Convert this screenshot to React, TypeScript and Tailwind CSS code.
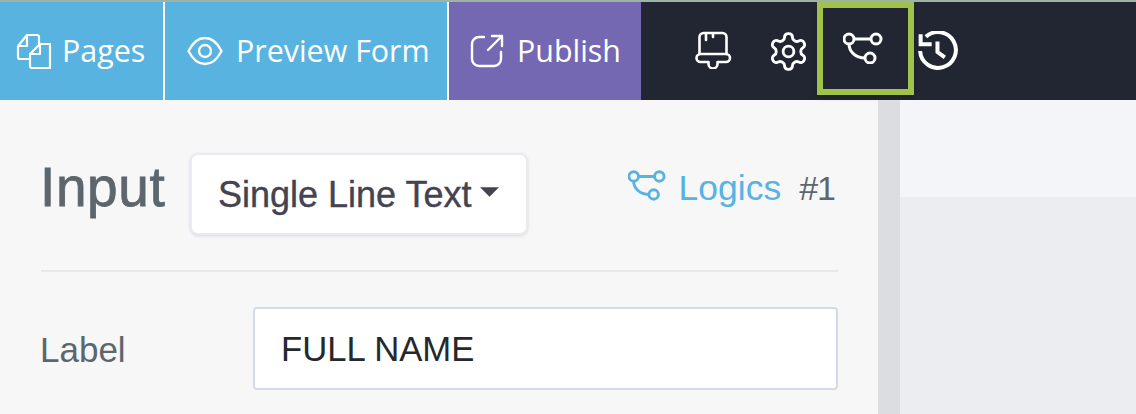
import React from 'react';

const LogicIcon = ({ className }: { className?: string }) => (
  <svg viewBox="0 0 40 32" fill="none" stroke="currentColor" strokeWidth="3" className={className}>
    <circle cx="6" cy="7" r="5" />
    <circle cx="33" cy="7" r="5" />
    <circle cx="27" cy="26" r="5" />
    <path d="M11 7h17M6 12c0 7 6 14 16 14" />
  </svg>
);

const App = () => {
  return (
    <div className="w-[1136px] h-[414px] overflow-hidden flex flex-col bg-[#f7f7f8] font-['Liberation_Sans',sans-serif]">
      <div className="h-[2px] bg-[#9db3a6]" />
      <div className="h-[98px] flex items-stretch bg-[#212632] text-white font-['Open_Sans',sans-serif] text-[30.4px]">
        <div className="w-[163px] pl-[16px] flex items-center gap-[10px] bg-[#58b3e1]">
          <svg viewBox="0 0 36 36" fill="none" stroke="currentColor" strokeWidth="2.2" strokeLinejoin="round" className="w-[36px] h-[36px]">
            <path d="M2 13 11 2h10a2 2 0 0 1 2 2v7M2 13v11a2 2 0 0 0 2 2h10M2 13h9V2" />
            <path d="M24 11h10v24H16a2 2 0 0 1-2-2V21l10-10v10H14" />
          </svg>
          <span>Pages</span>
        </div>
        <div className="w-[2px] bg-white" />
        <div className="w-[282px] pl-[22px] flex items-center gap-[13px] bg-[#58b3e1]">
          <svg viewBox="0 0 36 30" fill="none" stroke="currentColor" strokeWidth="2.4" className="w-[36px] h-[30px]">
            <path d="M1.500 15C6 6 11 2 18 2s12 4 16.500 13C30 24 25 28 18 28S6 24 1.500 15Z" />
            <circle cx="18" cy="15" r="6" />
          </svg>
          <span>Preview Form</span>
        </div>
        <div className="w-[2px] bg-white" />
        <div className="w-[192px] pl-[21px] flex items-center gap-[13px] bg-[#7468b3]">
          <svg viewBox="0 0 34 34" fill="none" stroke="currentColor" strokeWidth="2.4" strokeLinecap="round" strokeLinejoin="round" className="w-[34px] h-[34px]">
            <path d="M14 3H9a7 7 0 0 0-7 7v15a7 7 0 0 0 7 7h15a7 7 0 0 0 7-7v-7" />
            <path d="M18 16 32 2M22 2h10v10" />
          </svg>
          <span>Publish</span>
        </div>
        <div className="flex-1 flex items-center">
          <svg viewBox="0 0 37 38" fill="none" stroke="currentColor" strokeWidth="2.6" strokeLinecap="round" strokeLinejoin="round" className="ml-[54px] -mt-[2px] w-[37px] h-[38px]">
            <path d="M4.500 23V6a4 4 0 0 1 4-4h19a4 4 0 0 1 4 4v17" />
            <path d="M5.500 23H31a4 4 0 0 1 0 8h-8.500v2a4.500 4.500 0 0 1-9 0v-2H5.500a4 4 0 0 1 0-8Z" />
            <path d="M11 3v6M18 3v3" />
          </svg>
          <svg viewBox="0 0 24 24" fill="none" stroke="currentColor" strokeWidth="1.6" strokeLinecap="round" strokeLinejoin="round" className="ml-[35px] w-[43px] h-[43px]">
            <path d="M12.220 2h-.440a2 2 0 0 0-2 2v.180a2 2 0 0 1-1 1.730l-.430.250a2 2 0 0 1-2 0l-.150-.080a2 2 0 0 0-2.730.730l-.220.380a2 2 0 0 0 .730 2.730l.150.100a2 2 0 0 1 1 1.720v.510a2 2 0 0 1-1 1.740l-.150.090a2 2 0 0 0-.730 2.730l.220.380a2 2 0 0 0 2.730.730l.150-.080a2 2 0 0 1 2 0l.430.250a2 2 0 0 1 1 1.730V20a2 2 0 0 0 2 2h.440a2 2 0 0 0 2-2v-.180a2 2 0 0 1 1-1.730l.430-.250a2 2 0 0 1 2 0l.150.080a2 2 0 0 0 2.730-.730l.220-.390a2 2 0 0 0-.730-2.730l-.150-.080a2 2 0 0 1-1-1.740v-.500a2 2 0 0 1 1-1.740l.150-.090a2 2 0 0 0 .730-2.730l-.220-.380a2 2 0 0 0-2.730-.730l-.150.080a2 2 0 0 1-2 0l-.430-.250a2 2 0 0 1-1-1.730V4a2 2 0 0 0-2-2z" />
            <circle cx="12" cy="12" r="3" />
          </svg>
          <div className="ml-[7px] -mt-[6px] w-[97px] h-[93px] flex items-center pl-[20px] border-[6px] border-[#a0c24a] shadow-md">
            <LogicIcon className="w-[40px] h-[32px]" />
          </div>
          <svg viewBox="0 0 38 38" fill="none" stroke="currentColor" strokeWidth="3.8" className="ml-[4px] w-[40px] h-[40px]">
            <path d="M7.500 5.500A17 17 0 1 1 2 19" />
            <path d="M2.500 3v9.500H13" strokeLinejoin="miter" />
            <path d="M18.500 10v10l7 5" />
          </svg>
        </div>
      </div>
      <div className="flex-1 flex">
        <div className="w-[878px] pl-[41px] pr-[40px]">
          <div className="h-[172px] border-b-2 border-[#e8e9ed] flex items-start pt-[53px]">
            <span className="mt-[3px] -ml-[1px] w-[150px] text-[55px] leading-[62px] tracking-[0.6px] text-[#5b666d] [-webkit-text-stroke:0.8px_#5b666d]">Input</span>
            <div className="w-[338px] h-[82px] rounded-[8px] bg-white border-2 border-[#e9ebf1] shadow-[0_1px_3px_rgba(120,130,160,0.25)] flex items-center pl-[26px] gap-[8px] text-[36px] text-[#45434f] [-webkit-text-stroke:0.4px_#45434f]">
              <span className="mt-[2px]">Single Line Text</span>
              <svg viewBox="0 0 20 10" className="w-[19px] h-[10px] -mt-[4px] fill-current"><path d="M0 0h20L10 10Z" /></svg>
            </div>
            <LogicIcon className="ml-auto mt-[16px] w-[38px] h-[32px] text-[#58b3e1]" />
            <span className="ml-[13px] mt-[14px] text-[35.5px] leading-[42px] text-[#58b3e1]">Logics</span>
            <span className="ml-[18px] mr-[3px] mt-[15px] text-[34px] leading-[40px] tracking-[-1px] text-[#5b666d]">#1</span>
          </div>
          <div className="mt-[35px] flex items-center">
            <span className="-ml-px w-[213px] mt-[3px] text-[35px] text-[#5b666d]">Label</span>
            <div className="flex-1 h-[83px] rounded-[4px] bg-white border-2 border-[#d5dbe6] flex items-center pl-[26px] text-[34.7px] text-[#25282c]">
              <span className="mt-[1px]">FULL NAME</span>
            </div>
          </div>
        </div>
        <div className="w-[22px] bg-[#dcdde0]" />
        <div className="flex-1 flex flex-col bg-[#ecedf1]">
          <div className="h-[97px] bg-[#f4f5f9]" />
        </div>
      </div>
    </div>
  );
};

export default App;
